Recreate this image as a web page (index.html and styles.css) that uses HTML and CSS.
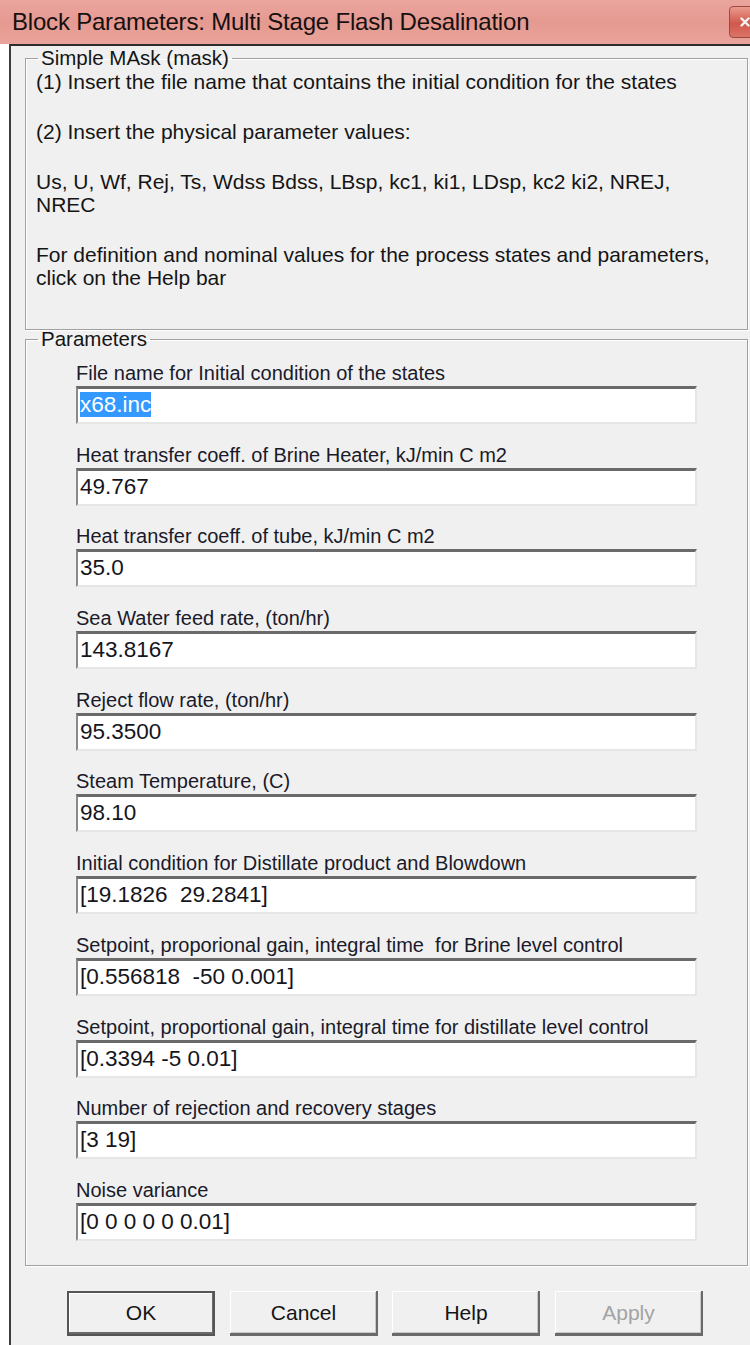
FILE: index.html
```html
<!DOCTYPE html>
<html lang="en">
<head>
<meta charset="utf-8">
<title>Block Parameters: Multi Stage Flash Desalination</title>
<link rel="stylesheet" href="styles.css">
</head>
<body>
<div class="window">
  <div class="titlebar">
    <span class="title">Block Parameters: Multi Stage Flash Desalination</span>
    <span class="close">
      <svg width="12" height="12" viewBox="0 0 12 12"><path d="M2.5 2.5 L9.5 9.5 M9.5 2.5 L2.5 9.5" stroke="#f4f4f4" stroke-width="2.4" stroke-linecap="round"/></svg>
    </span>
  </div>
  <div class="frame">
    <div class="client">
      <fieldset class="group group-desc">
        <legend>Simple MAsk (mask)</legend>
        <p>(1) Insert the file name that contains the initial condition for the states</p>
        <p>(2) Insert the physical parameter values:</p>
        <p>Us, U, Wf, Rej, Ts, Wdss Bdss, LBsp, kc1, ki1, LDsp, kc2 ki2, NREJ,<br>NREC</p>
        <p>For definition and nominal values for the process states and parameters,<br>click on the Help bar</p>
      </fieldset>

      <fieldset class="group group-params">
        <legend>Parameters</legend>
        <div class="field">
          <label>File name for Initial condition of the states</label>
          <div class="edit"><span class="selected">x68.inc</span></div>
        </div>
        <div class="field">
          <label>Heat transfer coeff. of Brine Heater, kJ/min C m2</label>
          <div class="edit">49.767</div>
        </div>
        <div class="field">
          <label>Heat transfer coeff. of tube, kJ/min C m2</label>
          <div class="edit">35.0</div>
        </div>
        <div class="field">
          <label>Sea Water feed rate, (ton/hr)</label>
          <div class="edit">143.8167</div>
        </div>
        <div class="field">
          <label>Reject flow rate, (ton/hr)</label>
          <div class="edit">95.3500</div>
        </div>
        <div class="field">
          <label>Steam Temperature, (C)</label>
          <div class="edit">98.10</div>
        </div>
        <div class="field">
          <label>Initial condition for Distillate product and Blowdown</label>
          <div class="edit">[19.1826&nbsp; 29.2841]</div>
        </div>
        <div class="field">
          <label>Setpoint, proporional gain, integral time&nbsp; for Brine level control</label>
          <div class="edit">[0.556818&nbsp; -50 0.001]</div>
        </div>
        <div class="field">
          <label>Setpoint, proportional gain, integral time for distillate level control</label>
          <div class="edit">[0.3394 -5 0.01]</div>
        </div>
        <div class="field">
          <label>Number of rejection and recovery stages</label>
          <div class="edit">[3 19]</div>
        </div>
        <div class="field">
          <label>Noise variance</label>
          <div class="edit">[0 0 0 0 0 0.01]</div>
        </div>
      </fieldset>

      <div class="buttons">
        <button class="btn btn-default">OK</button>
        <button class="btn">Cancel</button>
        <button class="btn">Help</button>
        <button class="btn" disabled>Apply</button>
      </div>
    </div>
  </div>
</div>
</body>
</html>
```

FILE: styles.css
```css
html, body {
  margin: 0;
  padding: 0;
  background: #ffffff;
  overflow: hidden;
}

body {
  width: 750px;
  height: 1345px;
  font-family: "Liberation Sans", Arial, sans-serif;
  color: #151515;
}

.window {
  width: 780px;
}

/* caption bar */
.titlebar {
  height: 44px;
  display: flex;
  align-items: center;
  justify-content: space-between;
  background: linear-gradient(180deg, #eaa59d 0%, #e59a91 50%, #e9a39a 100%);
}

.title {
  padding-left: 12px;
  font-size: 24px;
  color: #161010;
  letter-spacing: -0.2px;
}

.close {
  width: 44px;
  height: 32px;
  margin-right: 7px;
  display: flex;
  align-items: center;
  padding-left: 9px;
  box-sizing: border-box;
  border: 1px solid #9b4a42;
  border-radius: 4px;
  background: linear-gradient(180deg, #eb9a8e 0%, #d0584c 55%, #dc7467 100%);
}

/* window frame */
.frame {
  margin-left: 9px;
  border-left: 2px solid #3c3c3c;
  border-top: 2px solid #2c2c2c;
  background: #f0f0f0;
  height: 1299px;
}

.client {
  padding: 0 32px 0 14px;
}

/* etched group boxes */
.group {
  margin: 0;
  border: 1px solid #a0a0a0;
  box-shadow: inset 1px 1px 0 #ffffff, 1px 1px 0 #ffffff;
}

.group legend {
  padding: 0 3px;
  margin-left: 2px;
  font-size: 20.5px;
  line-height: 24px;
}

.group-desc {
  padding: 0 10px 40px 10px;
  font-size: 21px;
}

.group-desc p {
  margin: 0 0 27px 0;
  line-height: 23px;
}

.group-desc p:last-child {
  margin-bottom: 0;
}

.group-params {
  margin-top: -3px;
  padding: 10px 10px 24px 10px;
}

.field {
  display: flex;
  flex-direction: column;
  margin: 0 40px 18.7px 40px;
}

.field:last-child {
  margin-bottom: 0;
}

.field label {
  font-size: 20px;
  line-height: 24px;
  color: #1a1a2a;
}

/* sunken edit control */
.edit {
  margin-top: 1px;
  height: 38px;
  box-sizing: border-box;
  background: #ffffff;
  border-top: 3px solid #6a6a6a;
  border-left: 2px solid #8a8a8a;
  border-right: 2px solid #e6e6e6;
  border-bottom: 2px solid #e6e6e6;
  padding: 1px 0 0 2px;
  font-size: 22.5px;
  line-height: 30px;
  color: #151520;
  white-space: pre;
}

.selected {
  background: #3399ff;
  color: #ffffff;
}

/* push buttons */
.buttons {
  display: flex;
  gap: 14.5px;
  padding: 25px 0 0 42px;
}

.btn {
  width: 148px;
  height: 45px;
  font-family: "Liberation Sans", Arial, sans-serif;
  font-size: 21px;
  color: #151515;
  background: #f0f0f0;
  border: none;
  box-shadow: inset -2px -3px 0 #6a6a6a, inset 1px 1px 0 #ffffff, inset -3px -4px 0 #c8c8c8;
  padding: 0;
}

.btn-default {
  box-shadow: inset 0 0 0 2px #555555, inset -3px -4px 0 #6a6a6a, inset 3px 3px 0 #ffffff;
}

.btn:disabled {
  color: #a3a3a3;
}
```
